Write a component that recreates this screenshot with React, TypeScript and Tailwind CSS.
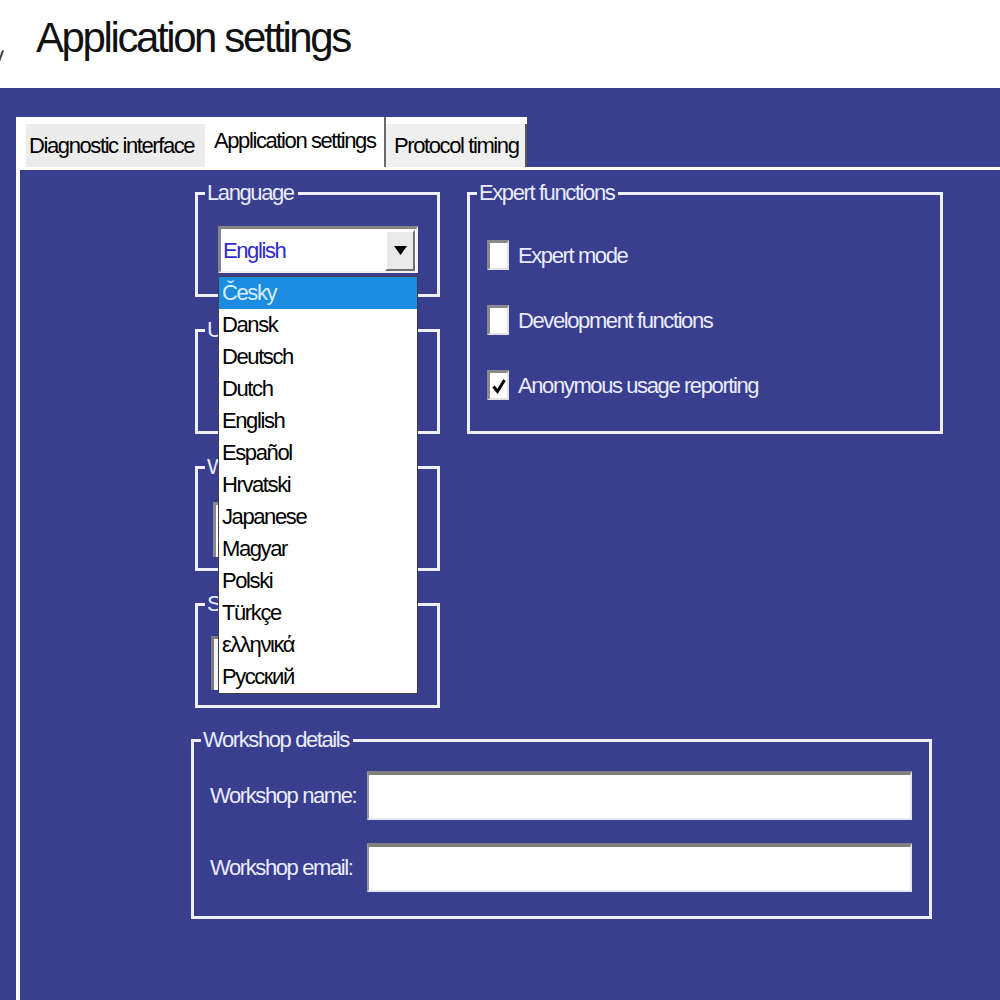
import { ReactNode } from "react";

const languages = [
  "Česky",
  "Dansk",
  "Deutsch",
  "Dutch",
  "English",
  "Español",
  "Hrvatski",
  "Japanese",
  "Magyar",
  "Polski",
  "Türkçe",
  "ελληνικά",
  "Русский",
];

export default function App() {
  return (
    <div className="h-[1000px] w-[1000px] overflow-hidden bg-white font-['Liberation_Sans',Arial,sans-serif] text-[22px] tracking-[-1.4px] text-black">
      <header className="relative h-[88px] pl-[36px] pt-[17px]">
        <span className="absolute left-0 top-[50px] h-[12px] w-[2px] rotate-[20deg] bg-[#444]" />
        <h1 className="text-[42px] leading-[42px] tracking-[-2.4px] text-[#111]">Application settings</h1>
      </header>

      <div className="flex h-[912px] flex-col bg-[#393e8f] pl-[16px] pt-[29px]">
        <div className="flex h-[50px] w-[511px] items-end bg-white pl-[10px]">
          <div className="flex h-[43px] w-[179px] items-center whitespace-nowrap bg-[#ececec] pl-[3px]">
            Diagnostic interface
          </div>
          <div className="flex h-[50px] w-[181px] items-center whitespace-nowrap border-r-2 border-[#6a6a6a] bg-white pb-[3px] pl-[9px]">
            Application settings
          </div>
          <div className="flex h-[43px] w-[141px] items-center whitespace-nowrap border-r-2 border-[#555] bg-[#efefef] pl-[8px]">
            Protocol timing
          </div>
        </div>

        <div className="flex-1 border-l-4 border-t-[3px] border-white pl-[171px] pt-[10px]">
          <div className="flex gap-[27px] pl-[4px]">
            <div className="flex w-[245px] flex-col gap-[20px]">
              <Group title="Language" className="h-[117px]">
                <div className="relative ml-[20px] mt-[20px] flex h-[47px] w-[200px] items-center border-l-[3px] border-t-[3px] border-b-2 border-r-2 border-l-[#858585] border-t-[#858585] border-b-[#f2f2f2] border-r-[#f2f2f2] bg-white pl-[2px]">
                  <span className="flex-1 text-[#2f2bc8]">English</span>
                  <span className="mr-[1px] flex h-[41px] w-[30px] items-center justify-center border-l-2 border-t-2 border-b-2 border-r-2 border-l-white border-t-white border-b-[#707070] border-r-[#707070] bg-[#e9e9e9]">
                    <svg width="13" height="9" viewBox="0 0 13 9">
                      <path d="M0 0 H13 L6.5 9 Z" fill="#000" />
                    </svg>
                  </span>

                  <ul className="absolute left-[-3px] top-[47px] z-10 w-[200px] border border-[#404040] bg-white text-black">
                    {languages.map((lang, i) => (
                      <li
                        key={lang}
                        className={
                          i === 0
                            ? "h-[32px] bg-[#1b8ce0] pl-[3px] leading-[32px] text-[#d8eeff]"
                            : "h-[32px] pl-[3px] leading-[32px]"
                        }
                      >
                        {lang}
                      </li>
                    ))}
                  </ul>
                </div>
              </Group>

              <Group title="Units" className="h-[117px]" />

              <Group title="Window" className="h-[117px]">
                <div className="ml-[15px] mt-[22px] h-[55px] w-[200px] border-l-[3px] border-t-[3px] border-[#8a8a8a] bg-white" />
              </Group>

              <Group title="Start" className="h-[117px]">
                <div className="ml-[13px] mt-[19px] h-[54px] w-[200px] border-l-[3px] border-t-[3px] border-[#7c7c7c] bg-[#f4f4f4]" />
              </Group>
            </div>

            <Group title="Expert functions" className="h-[254px] w-[476px]">
              <div className="mt-[29px] flex flex-col gap-[25px] pl-[17px]">
                <CheckRow label="Expert mode" />
                <CheckRow label="Development functions" />
                <CheckRow label="Anonymous usage reporting" checked />
              </div>
            </Group>
          </div>

          <Group title="Workshop details" className="mt-[19px] h-[192px] w-[741px]">
            <div className="mt-[18px] flex flex-col gap-[23px] pl-[16px]">
              <FieldRow label="Workshop name:" />
              <FieldRow label="Workshop email:" />
            </div>
          </Group>
        </div>
      </div>
    </div>
  );
}

function Group({ title, className, children }: { title: string; className?: string; children?: ReactNode }) {
  return (
    <fieldset className={`border-[3px] border-[#eef0fa] p-0 ${className ?? ""}`}>
      <legend className="ml-[7px] pl-[2px] pr-[4px] leading-[26px] text-[#e9ecfb]">{title}</legend>
      {children}
    </fieldset>
  );
}

function CheckRow({ label, checked }: { label: string; checked?: boolean }) {
  return (
    <div className="flex h-[40px] items-center gap-[9px] text-[#e9ecfb]">
      <span className="flex h-[30px] w-[22px] items-center justify-center border-l-[3px] border-t-[3px] border-b-2 border-r-2 border-l-[#8a8a8a] border-t-[#8a8a8a] border-b-[#e2e2e2] border-r-[#e2e2e2] bg-white">
        {checked ? (
          <svg width="14" height="16" viewBox="0 0 14 16">
            <path d="M1.5 8.5 L5.5 13.5 L12.5 2" fill="none" stroke="#000" strokeWidth="3" />
          </svg>
        ) : null}
      </span>
      <span>{label}</span>
    </div>
  );
}

function FieldRow({ label }: { label: string }) {
  return (
    <div className="flex items-center">
      <span className="w-[157px] whitespace-nowrap text-[#e9ecfb]">{label}</span>
      <div className="h-[49px] w-[545px] border-l-2 border-t-[4px] border-b-2 border-r-2 border-l-[#9a9a9a] border-t-[#808080] border-b-[#e4e6f2] border-r-[#e4e6f2] bg-white" />
    </div>
  );
}
